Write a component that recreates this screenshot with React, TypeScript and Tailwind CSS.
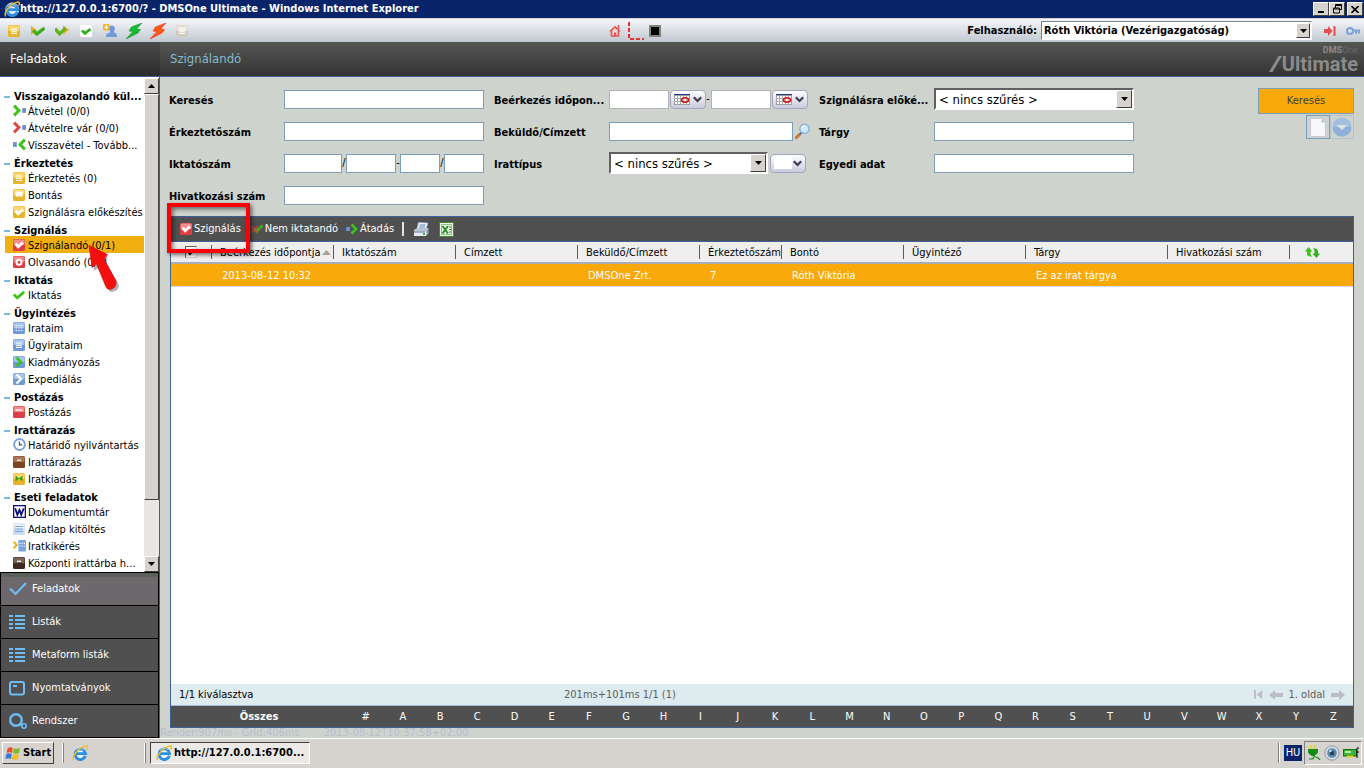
import type { ReactNode, SVGProps } from "react";
import { clsx } from "clsx";

type IconProps = SVGProps<SVGSVGElement>;

const Svg = ({ size = 12, children, ...props }: IconProps & { size?: number }) => (
  <svg width={size} height={size} viewBox="0 0 12 12" fill="none" aria-hidden="true" className="shrink-0" {...props}>
    {children}
  </svg>
);

// icons
const tones = {
  yellow: ["#f9d873", "#e9b32c"],
  red: ["#f28b8b", "#dc4046"],
  blue: ["#a9c4ec", "#6f99d8"],
  brown: ["#a87858", "#7c4424"],
  dark: ["#7c6458", "#3e2a22"],
  light: ["#e9f0fb", "#cddcf3"],
  stone: ["#ece7dc", "#d2ccc0"],
};

const Tile = ({ tone, size, children }: { tone: keyof typeof tones; size?: number; children?: ReactNode }) => (
  <Svg size={size}>
    <rect width="12" height="12" rx="1.5" fill={tones[tone][1]} />
    <rect x="0.5" y="0.5" width="11" height="5.5" rx="1" fill={tones[tone][0]} />
    {children}
  </Svg>
);

const whiteCheck = <path d="M2.5 4.8 5.2 7.8 9.8 3.5" stroke="#fff" strokeWidth="2.9" />;
const whiteLines = <path d="M3 4h6M3 6.2h6M3 8.4h6" stroke="#fff" strokeWidth="1.1" />;

const Check = ({ color = "#2fae1c", size }: { color?: string; size?: number }) => (
  <Svg size={size}>
    <path d="M0.8 5.4 4.2 8.8 11.2 2.8" stroke={color} strokeWidth="2.8" />
  </Svg>
);

const Chevrons = ({ color, flip }: { color: string; flip?: boolean }) => (
  <Svg size={13} transform={flip ? "scale(-1 1)" : undefined}>
    <path d="M1 1.5 5.4 6 1 10.5" stroke={color} strokeWidth="2.8" />
    <rect x="8.5" y="3.8" width="3.5" height="4.4" fill="#6d8fd0" />
  </Svg>
);

const IeIcon = ({ size = 16 }: { size?: number }) => (
  <svg width={size} height={size} viewBox="0 0 16 16" fill="none" aria-hidden="true" className="shrink-0">
    <circle cx="8.2" cy="8.6" r="7" fill="#f4faff" opacity="0.9" />
    <path d="M13.4 10.8A5.3 5.3 0 1 1 13.6 8.6H4.5" stroke="#2d8fe0" strokeWidth="2.9" />
    <path d="M4.3 5.2A5.3 5.3 0 0 1 12 5" stroke="#66bdf5" strokeWidth="1.2" />
    <path d="M1.8 15.2C-.6 12.6 4 6.2 8.6 3.2 12 1 15.4.2 15.4 2.2c0 .8-.4 1.7-.8 2.4" stroke="#f1b92c" strokeWidth="1.5" />
  </svg>
);

const Bolt = ({ fill, stroke }: { fill: string; stroke: string }) => (
  <svg width="16" height="16" viewBox="0 0 16 16" aria-hidden="true">
    <path d="M16 0 5.5 4 3 8l4 .5L0 16l12-6 2.5-3.5L10.5 6z" fill={fill} stroke={stroke} strokeWidth="0.5" />
  </svg>
);

const PersonIcon = () => (
  <svg width="14" height="14" viewBox="0 0 14 14" aria-hidden="true">
    <path d="M5.5 5a3.2 3.2 0 1 1 5.5 2v1.5c2 .4 3 1.5 3 4.5H3c0-3 1.5-4 4-4.5V7z" fill="#6f99d8" />
    <rect width="6.5" height="6.5" rx="1" fill="#eab830" />
    <path d="M3.3 1.5v3.6M1.5 3.3h3.6" stroke="#fff" strokeWidth="1.3" />
  </svg>
);

const ListIcon = () => (
  <svg width="16" height="16" viewBox="0 0 16 16" aria-hidden="true" stroke="#6fbdf5" strokeWidth="2">
    <path d="M0 2h4M6 2h10M0 6h4M6 6h10M0 10h4M6 10h10M0 14h4M6 14h10" />
  </svg>
);

const Down = () => (
  <svg width="7" height="4" viewBox="0 0 7 4" aria-hidden="true">
    <path d="M0 0h7L3.5 4z" fill="#000" />
  </svg>
);

const bevel = "border border-t-white border-l-white border-r-[#404040] border-b-[#404040] bg-[#d6d3ce]";

type Item = { label: string; icon: ReactNode; active?: boolean };

const groups: { title: string; items: Item[] }[] = [
  {
    title: "Visszaigazolandó kül...",
    items: [
      { label: "Átvétel (0/0)", icon: <Chevrons color="#3cc41c" /> },
      { label: "Átvételre vár (0/0)", icon: <Chevrons color="#dc4848" /> },
      { label: "Visszavétel - Tovább...", icon: <Chevrons color="#3cc41c" flip /> },
    ],
  },
  {
    title: "Érkeztetés",
    items: [
      { label: "Érkeztetés (0)", icon: <Tile tone="yellow">{whiteLines}</Tile> },
      { label: "Bontás", icon: <Tile tone="yellow"><rect x="2.5" y="2.5" width="7" height="5" fill="#fff" /></Tile> },
      { label: "Szignálásra előkészítés", icon: <Tile tone="yellow">{whiteCheck}</Tile> },
    ],
  },
  {
    title: "Szignálás",
    items: [
      { label: "Szignálandó (0/1)", icon: <Tile tone="red">{whiteCheck}</Tile>, active: true },
      {
        label: "Olvasandó (0/0)",
        icon: <Tile tone="red"><circle cx="6" cy="6.3" r="2.5" stroke="#fff" strokeWidth="2" fill="#dc4046" /></Tile>,
      },
    ],
  },
  { title: "Iktatás", items: [{ label: "Iktatás", icon: <Check color="#3cc41c" /> }] },
  {
    title: "Ügyintézés",
    items: [
      {
        label: "Irataim",
        icon: <Tile tone="blue"><path d="M2.5 3.5h7M2.5 6h7M2.5 8.5h7" stroke="#fff" strokeDasharray="1.5 1.2" strokeWidth="1.2" /></Tile>,
      },
      { label: "Ügyirataim", icon: <Tile tone="blue">{whiteLines}</Tile> },
      { label: "Kiadmányozás", icon: <Tile tone="blue"><path d="M3.5 1.5 8 6l-4.5 4.5" stroke="#3cc41c" strokeWidth="2.6" /></Tile> },
      { label: "Expediálás", icon: <Tile tone="blue"><path d="M3.5 1.5 8 6l-4.5 4.5" stroke="#fff" strokeWidth="2.4" /></Tile> },
    ],
  },
  { title: "Postázás", items: [{ label: "Postázás", icon: <Tile tone="red"><path d="M2.5 4h7" stroke="#fff" strokeWidth="1.3" /></Tile> }] },
  {
    title: "Irattárazás",
    items: [
      {
        label: "Határidő nyilvántartás",
        icon: (
          <Svg size={13}>
            <circle cx="6" cy="6" r="5" fill="#fff" stroke="#7da2dc" strokeWidth="1.8" />
            <path d="M6 3.2V6.4H8.5" stroke="#35507c" strokeWidth="1.2" />
          </Svg>
        ),
      },
      { label: "Irattárazás", icon: <Tile tone="brown"><path d="M4 4.2h4" stroke="#fff" strokeWidth="1.2" /></Tile> },
      {
        label: "Iratkiadás",
        icon: <Tile tone="yellow"><path d="M2.5 2.5 6 5.5 2.5 8.5zM9.5 2.5 6 5.5l3.5 3z" fill="#2f9e1c" /></Tile>,
      },
    ],
  },
  {
    title: "Eseti feladatok",
    items: [
      {
        label: "Dokumentumtár",
        icon: (
          <Svg size={13}>
            <rect x="0.6" y="0.6" width="10.8" height="10.8" fill="#fff" stroke="#10107c" strokeWidth="1.2" />
            <path d="M2 3 4 9 6 4.5 7.6 9 10 3" stroke="#10107c" strokeWidth="1.7" />
          </Svg>
        ),
      },
      { label: "Adatlap kitöltés", icon: <Tile tone="light"><path d="M2 3.5h8M2 6h8M2 8.5h8" stroke="#7da2dc" /></Tile> },
      {
        label: "Iratkikérés",
        icon: (
          <Svg size={13}>
            <path d="M.5 2.5 3.5 5.5.5 8.5" stroke="#eab020" strokeWidth="1.8" />
            <rect x="5" y="1" width="7" height="10.5" rx="1" fill="#7da2dc" />
            <path d="M6 4h5M6 6.5h5" stroke="#fff" strokeDasharray="1 1" />
          </Svg>
        ),
      },
      { label: "Központi irattárba h...", icon: <Tile tone="dark"><path d="M4 4.2h4" stroke="#fff" strokeWidth="1.2" /></Tile> },
    ],
  },
];

const sections: Item[] = [
  {
    label: "Feladatok",
    active: true,
    icon: (
      <svg width="18" height="16" viewBox="0 0 18 16" fill="none" aria-hidden="true">
        <path d="M1 7.5 6.5 13 17 2" stroke="#6fbdf5" strokeWidth="2.2" />
      </svg>
    ),
  },
  { label: "Listák", icon: <ListIcon /> },
  { label: "Metaform listák", icon: <ListIcon /> },
  {
    label: "Nyomtatványok",
    icon: (
      <svg width="16" height="16" viewBox="0 0 16 16" fill="none" aria-hidden="true" stroke="#6fbdf5" strokeWidth="2">
        <rect x="1" y="2" width="14" height="12.5" rx="2" />
        <path d="M4 6h4" />
      </svg>
    ),
  },
  {
    label: "Rendszer",
    icon: (
      <svg width="18" height="16" viewBox="0 0 18 16" fill="none" aria-hidden="true" stroke="#6fbdf5">
        <circle cx="7" cy="7" r="5.8" strokeWidth="2.4" />
        <circle cx="15" cy="13" r="2.2" strokeWidth="1.6" />
        <path d="M11 12h2" strokeWidth="2" />
      </svg>
    ),
  },
];

const TitleBar = () => (
  <header className="flex h-[18px] shrink-0 items-center bg-[#0a246a] pl-1 text-white">
    <IeIcon />
    <h1 className="flex-1 truncate font-bold">http://127.0.0.1:6700/? - DMSOne Ultimate - Windows Internet Explorer</h1>
    <div className="flex pr-px">
      <button aria-label="Minimize" className={clsx(bevel, "flex h-3.5 w-4 items-end justify-center pb-0.5")}>
        <span className="h-0.5 w-1.5 bg-black" />
      </button>
      <button aria-label="Restore" className={clsx(bevel, "flex h-3.5 w-4 items-center justify-center")}>
        <svg width="9" height="10" viewBox="0 0 9 10" fill="none" stroke="#000" aria-hidden="true">
          <path d="M2.5 4V.5h6v5H7M2.5 1.5h6M.5 4h6v5h-6zM.5 5h6" />
        </svg>
      </button>
      <button aria-label="Close" className={clsx(bevel, "ml-0.5 flex h-3.5 w-4 items-center justify-center")}>
        <svg width="8" height="7" viewBox="0 0 8 7" stroke="#000" strokeWidth="1.6" aria-hidden="true">
          <path d="M.5 0l7 7M7.5 0l-7 7" />
        </svg>
      </button>
    </div>
  </header>
);

const tools = [
  { name: "Lista", icon: <Tile tone="yellow">{whiteLines}</Tile> },
  { name: "Elfogad", icon: <Svg size={14}><path d="M0 1.5 5 5.5 0 9.5z" fill="#eab020" /><path d="M2 5.5l3 3.2 6.5-5.2" stroke="#3cae1c" strokeWidth="2.8" /></Svg> },
  { name: "Továbbít", icon: <Svg size={14}><path d="M7 1 12 5 7 9z" fill="#eab020" /><path d="M0 4l4 4.5L9 3.5" stroke="#5cb41c" strokeWidth="2.8" /></Svg> },
  { name: "Kész", icon: <Svg><rect width="12" height="12" rx="1" fill="#fff" /><path d="M2 5.5 5 8.3 10.5 4" stroke="#2fae1c" strokeWidth="2.8" /></Svg> },
  { name: "Új személy", icon: <PersonIcon /> },
  { name: "Csatlakozás", icon: <Bolt fill="#10c030" stroke="#0f7c20" /> },
  { name: "Bontás", icon: <Bolt fill="#ff5a10" stroke="#f01010" /> },
  { name: "Napló", icon: <Tile tone="stone">{whiteLines}</Tile> },
];

const TopToolbar = () => (
  <div className="flex h-6 shrink-0 items-center border-t border-[#d6d3ce] bg-linear-to-b from-[#f4f7fa] to-[#c2c8d0]">
    <div className="flex w-[608px] shrink items-center pl-0.5">
      {tools.map((tool) => (
        <button key={tool.name} aria-label={tool.name} className="flex w-6 justify-center">
          {tool.icon}
        </button>
      ))}
    </div>
    <div className="flex items-center">
      <button aria-label="Kezdőlap" className="p-px">
        <Svg>
          <path d="M1 6.5 6 1.8l5 4.7M2.5 6v5h7V6" stroke="#e05858" strokeWidth="1.7" fill="#fbd4d4" />
          <path d="M9.5 0v4" stroke="#e05858" strokeWidth="1.6" />
          <path d="M5 7.5h2.2v4H5z" fill="#e05858" />
        </Svg>
      </button>
      <svg width="17" height="18" viewBox="0 0 17 18" className="ml-1.5" fill="none" aria-hidden="true">
        <path d="M1 0v17h15" stroke="#f00000" strokeWidth="1.6" strokeDasharray="4 2" />
      </svg>
      <div className="ml-1 size-3 border-2 border-[#808080] bg-black" />
    </div>
    <div className="flex flex-1 items-center justify-end pr-1">
      <label htmlFor="user" className="pr-1 font-bold">Felhasználó:</label>
      <div className="relative">
        <select
          id="user"
          className="h-[19px] w-[271px] appearance-none border border-t-[#808080] border-l-[#808080] border-r-white border-b-white bg-white pl-0.5 font-bold"
        >
          <option>Róth Viktória (Vezérigazgatóság)</option>
        </select>
        <span className={clsx(bevel, "pointer-events-none absolute inset-y-0.5 right-0.5 flex w-3.5 items-center justify-center")}>
          <Down />
        </span>
      </div>
      <button aria-label="Kilépés" className="ml-3">
        <Svg><path d="M0 4h4V1l4.5 5L4 11V8H0zM9.5 1h2v10h-2z" fill="#e25050" /></Svg>
      </button>
      <button aria-label="Jelszó" className="ml-2.5">
        <svg width="14" height="12" viewBox="0 0 14 12" fill="none" stroke="#7da2dc" strokeWidth="2" aria-hidden="true">
          <circle cx="4" cy="6" r="3" />
          <path d="M7 5.5h7M10 6v3M13 6v2.5" />
        </svg>
      </button>
    </div>
  </div>
);

const PageHeader = () => (
  <div className="flex h-[35px] shrink-0 items-center border-b border-[#3f5f9a] bg-linear-to-b from-[#565755] to-[#333] text-[13px]">
    <h2 className="flex h-full w-40 shrink-0 items-center bg-linear-to-b from-[#4b4b4b] to-[#2b2b2b] pl-2.5 text-white">Feladatok</h2>
    <h2 className="flex-1 pl-2.5 text-[#85bccb]">Szignálandó</h2>
    <div className="flex flex-col items-end pr-1.5 font-[Roboto] font-bold text-[#8b8b8b]">
      <span className="text-[9px] leading-[9px]">
        DMS<span className="font-normal text-[#666]">One</span>
      </span>
      <div className="flex items-center">
        <svg width="13" height="16" viewBox="0 0 13 16" aria-hidden="true">
          <path d="M0 16 9.500 0H13L3.500 16z" fill="#8b8b8b" />
        </svg>
        <span className="text-xl leading-[18px]">Ultimate</span>
      </div>
    </div>
  </div>
);

const Arrow = () => (
  <svg width="36" height="50" viewBox="0 0 36 50" className="absolute left-[81px] top-2 z-10" aria-hidden="true">
    <path d="M6 4 22 13 20 18 33 41Q33 48 24 48L13 23 8 27z" fill="#000" opacity="0.3" />
    <path d="M3 1.5 21.5 10.5 18 15 30 37Q31 44 24 45.5 21 45.5 20 43L10.5 20 6 23.5z" fill="#f40f0f" stroke="#d00808" strokeWidth="0.6" />
  </svg>
);

const Scrollbar = () => (
  <div className="flex w-[15px] shrink-0 flex-col bg-[#e9e7e3]" aria-hidden="true">
    <div className={clsx(bevel, "flex h-4 items-center justify-center")}>
      <svg width="7" height="4" viewBox="0 0 7 4"><path d="M0 4h7L3.5 0z" /></svg>
    </div>
    <div className={clsx(bevel, "h-[406px]")} />
    <div className="flex-1" />
    <div className={clsx(bevel, "flex h-4 items-center justify-center")}>
      <Down />
    </div>
  </div>
);

const Sidebar = () => (
  <aside className="flex w-40 shrink-0 flex-col border-r border-[#3f5f9a] bg-white">
    <div className="flex min-h-0 flex-1 pt-px">
      <nav className="min-w-0 flex-1 overflow-hidden pt-2">
        {groups.map((group) => (
          <section key={group.title}>
            <h3 className="flex h-4 items-end whitespace-nowrap pl-1 font-bold leading-[10px]">
              <span className="mb-1 mr-1 h-0.5 w-1.5 shrink-0 bg-[#7ab8e0]" />
              {group.title}
            </h3>
            <ul>
              {group.items.map((item) => (
                <li key={item.label} className={clsx("relative ml-[5px] h-[17px]", item.active && "bg-[#f0ae10]")}>
                  <a href="#" className="flex h-full items-center whitespace-nowrap pl-2">
                    <span className="flex w-[15px] shrink-0">{item.icon}</span>
                    <span className="pt-0.5">{item.label}</span>
                  </a>
                  {item.active && <Arrow />}
                </li>
              ))}
            </ul>
          </section>
        ))}
      </nav>
      <Scrollbar />
    </div>
    <nav className="shrink-0 border-x border-t border-black text-white">
      {sections.map((item) => (
        <a
          key={item.label}
          href="#"
          className={clsx(
            "flex h-[33px] items-center border-b border-black pl-2",
            item.active ? "bg-[#6c686c] shadow-[inset_0_4px_#5c605a]" : "bg-[#505050]"
          )}
        >
          <span className="flex w-[23px]">{item.icon}</span>
          {item.label}
        </a>
      ))}
    </nav>
  </aside>
);

const Field = ({ id, label, children }: { id: string; label: string; children: ReactNode }) => (
  <div className="flex h-8 items-center">
    <label htmlFor={id} className="w-[115px] shrink-0 whitespace-nowrap pt-1 font-bold">{label}</label>
    <div className="flex w-[200px] items-center">{children}</div>
  </div>
);

const Input = ({ id, className, label }: { id: string; className?: string; label?: string }) => (
  <input id={id} aria-label={label} className={clsx("h-[19px] min-w-0 border border-[#7b9ebd] bg-white px-1 outline-none", className)} />
);

const Separator = ({ children }: { children: string }) => <span className="w-1 shrink-0 text-center">{children}</span>;

const FilterSelect = ({ id, className }: { id: string; className: string }) => (
  <div className={clsx("relative shrink-0", className)}>
    <select
      id={id}
      className="block h-[22px] w-full appearance-none border-2 border-t-[#606060] border-l-[#606060] border-r-white border-b-white bg-white pl-[3px] pt-px text-[13px] leading-4"
    >
      <option>&lt; nincs szűrés &gt;</option>
    </select>
    <span className={clsx(bevel, "pointer-events-none absolute inset-y-0.5 right-0.5 flex w-4 items-center justify-center")}>
      <Down />
    </span>
  </div>
);

const PickButton = ({ label, calendar }: { label: string; calendar?: boolean }) => (
  <button
    type="button"
    aria-label={label}
    className="flex h-[19px] w-9 shrink-0 items-center justify-between rounded-sm border border-[#a5a5bd] bg-linear-to-b from-white to-[#c9cbdf] px-[3px]"
  >
    {calendar ? (
      <svg width="16" height="11" viewBox="0 0 16 11" fill="none" aria-hidden="true">
        <rect x="0.5" y="1.5" width="15" height="9" fill="#fff" stroke="#9c9c9c" />
        <path d="M0 4.5h16M0 7.5h16M3.5 2v9M6.5 2v9M9.5 2v9M12.5 2v9" stroke="#aaa" />
        <path d="M0 .5h16" stroke="#1c3c94" />
        <ellipse cx="11" cy="6" rx="3.5" ry="2.2" stroke="#d41414" strokeWidth="1.6" />
      </svg>
    ) : (
      <span className="h-3 w-[18px] bg-white" />
    )}
    <svg width="9" height="7" viewBox="0 0 9 7" fill="none" stroke="#3c3c4c" strokeWidth="2.2" aria-hidden="true">
      <path d="M.8 1.2 4.5 5 8.2 1.2" />
    </svg>
  </button>
);

const FilterForm = () => (
  <form className="flex items-start pb-[5px] pl-[9px] pr-2.5 pt-1.5">
    <div className="flex flex-1 gap-2.5">
      <div>
        <Field id="kereses" label="Keresés"><Input id="kereses" className="w-full" /></Field>
        <Field id="erkezteto" label="Érkeztetőszám"><Input id="erkezteto" className="w-full" /></Field>
        <Field id="iktato" label="Iktatószám">
          <Input id="iktato" className="w-[58px]" />
          <Separator>/</Separator>
          <Input id="iktato2" label="Iktatószám 2" className="w-[50px]" />
          <Separator>-</Separator>
          <Input id="iktato3" label="Iktatószám 3" className="w-10" />
          <Separator>/</Separator>
          <Input id="iktato4" label="Iktatószám 4" className="w-10" />
        </Field>
        <Field id="hivatkozas" label="Hivatkozási szám"><Input id="hivatkozas" className="w-full" /></Field>
      </div>
      <div>
        <Field id="beerkezes" label="Beérkezés időpon...">
          <Input id="beerkezes" className="mr-px w-[60px] shrink-0 border-[#b4b4b4]" />
          <PickButton label="Kezdő dátum" calendar />
          <Separator>-</Separator>
          <Input id="beerkezes2" label="Beérkezés vége" className="ml-px mr-px w-[60px] shrink-0 border-[#b4b4b4]" />
          <PickButton label="Záró dátum" calendar />
        </Field>
        <Field id="bekuldo" label="Beküldő/Címzett">
          <Input id="bekuldo" className="w-[184px] shrink-0" />
          <button type="button" aria-label="Beküldő keresése" className="ml-px shrink-0">
            <svg width="16" height="17" viewBox="0 0 16 17" fill="none" aria-hidden="true">
              <path d="M1.5 15.5 6 11" stroke="#c47830" strokeWidth="3" />
              <path d="M5.5 11.5 7.5 9.5" stroke="#5c6c8c" strokeWidth="2" />
              <circle cx="10.5" cy="5.8" r="4.6" fill="#c8eafc" stroke="#8fb0dc" strokeWidth="1.5" />
              <path d="M8 5a3 3 0 0 1 3-2" stroke="#fff" strokeWidth="1.5" />
            </svg>
          </button>
        </Field>
        <Field id="irattipus" label="Irattípus">
          <FilterSelect id="irattipus" className="mr-0.5 w-[159px]" />
          <PickButton label="Irattípus választó" />
        </Field>
      </div>
      <div>
        <Field id="eloke" label="Szignálásra előké..."><FilterSelect id="eloke" className="w-full" /></Field>
        <Field id="targy" label="Tárgy"><Input id="targy" className="w-full" /></Field>
        <Field id="egyedi" label="Egyedi adat"><Input id="egyedi" className="w-full" /></Field>
      </div>
    </div>
    <div className="flex flex-col items-end gap-px pt-[5px]">
      <button type="button" className="h-[26px] w-24 border border-[#7b9ebd] bg-[#f9a90a] text-[#404040]">Keresés</button>
      <div className="flex">
        <button type="button" aria-label="Új lap" className="flex size-6 items-center justify-center border border-[#7b9ebd]">
          <svg width="16" height="19" viewBox="0 0 16 19" aria-hidden="true">
            <path d="M.5.5h11l4 4v14H.5z" fill="#f8f8fc" stroke="#c8c8d4" />
            <path d="M11.5.5v4h4" fill="#b4c8e4" />
          </svg>
        </button>
        <button type="button" aria-label="Lenyitás" className="flex size-6 items-center justify-center border border-[#b0c3d4]">
          <svg width="20" height="20" viewBox="0 0 20 20" aria-hidden="true">
            <circle cx="10" cy="10" r="9.5" fill="#a3bfe0" />
            <path d="M.5 10a9.5 9.5 0 0 0 19 0z" fill="#8fb0d8" />
            <path d="M4.5 8h11L10 13z" fill="#dde4e4" />
          </svg>
        </button>
      </div>
    </div>
  </form>
);

const GridToolbar = () => (
  <div className="relative flex h-[25px] items-center border-b border-[#3f5f9a] bg-[#505050] pl-[9px] text-white">
    <button className="flex items-center gap-0.5"><Tile tone="red">{whiteCheck}</Tile>Szignálás</button>
    <button className="ml-2.5 flex items-center gap-0.5">
      <Svg>
        <path d="M3 5.5 5.5 8.5 11.5 2.5" stroke="#3cae1c" strokeWidth="2.8" />
        <path d="M0.5 3.5l6 6M6.5 3.5l-6 6" stroke="#e04030" strokeWidth="1.5" />
      </Svg>
      Nem iktatandó
    </button>
    <button className="ml-2 flex items-center gap-0.5">
      <Svg>
        <rect y="4" width="4" height="4" fill="#6d8fd0" />
        <path d="M5.5 1.5 10 6l-4.5 4.5" stroke="#3cc41c" strokeWidth="2.6" />
      </Svg>
      Átadás
    </button>
    <span className="ml-2 h-3.5 w-0.5 bg-[#e4e4e4]" />
    <button aria-label="Nyomtatás" className="ml-2.5">
      <svg width="15" height="15" viewBox="0 0 15 15" aria-hidden="true">
        <path d="M4.5.5 14 1l-2 6H3z" fill="#f8fcff" stroke="#8fb0dc" strokeWidth="0.8" />
        <path d="M5.5 3h6M5 5h6" stroke="#5c7cb4" />
        <path d="M0 8 3 6h11.5v5L12 14H0z" fill="#b8c4d4" />
        <path d="M0 9.5h12V14H0z" fill="#e8eef4" />
        <path d="M0 10h11M14 7v4" stroke="#5c7498" />
        <rect x="9" y="11" width="2" height="2" fill="#20c420" />
      </svg>
    </button>
    <button aria-label="Excel" className="ml-2.5">
      <svg width="15" height="15" viewBox="0 0 15 15" fill="none" aria-hidden="true">
        <rect x="0.5" y="0.5" width="14" height="14" fill="#eaf5e4" stroke="#3c8c2c" />
        <rect x="2.5" y="2.5" width="10" height="10" stroke="#8cc47c" />
        <path d="M3.5 4 9 11.5M9 4l-5.5 7.5" stroke="#2c8c2c" strokeWidth="2" />
        <path d="M10 5h2.5M10 7.5h2.5M10 10h2.5" stroke="#3c8c2c" />
      </svg>
    </button>
    {/* callout round the first command */}
    <div className="pointer-events-none absolute -left-1 -top-3.5 z-10 h-[50px] w-[83px] border-4 border-[#fb0007] shadow-[2px_2px_4px_#0008,inset_2px_2px_4px_#0008]" />
  </div>
);

const columns = [
  { title: "Beérkezés időpontja", width: "w-[122px]", value: "2013-08-12 10:32", sorted: true },
  { title: "Iktatószám", width: "w-[122px]", value: "" },
  { title: "Címzett", width: "w-[122px]", value: "" },
  { title: "Beküldő/Címzett", width: "w-[122px]", value: "DMSOne Zrt." },
  { title: "Érkeztetőszám", width: "w-[82px]", value: "7" },
  { title: "Bontó", width: "w-[122px]", value: "Róth Viktória" },
  { title: "Ügyintéző", width: "w-[122px]", value: "" },
  { title: "Tárgy", width: "w-[142px]", value: "Ez az irat tárgya" },
  { title: "Hivatkozási szám", width: "w-[122px]", value: "" },
];

const DataTable = () => (
  <table className="w-full table-fixed border-collapse">
    <thead>
      <tr className="h-[21px] border-b-2 border-[#a9adb6] bg-[#efefef] text-left">
        <th className="w-10 p-0 pl-3.5">
          <span className="relative block size-3">
            <input
              type="checkbox"
              defaultChecked
              aria-label="Összes kijelölése"
              className="block size-3 appearance-none border border-t-[#606060] border-l-[#606060] border-r-[#d6d3ce] border-b-[#d6d3ce] bg-white"
            />
            <Svg size={8} className="pointer-events-none absolute left-0.5 top-0.5">
              <path d="M1 5l3.5 4L11 2" stroke="#000" strokeWidth="3" />
            </Svg>
          </span>
        </th>
        {columns.map((col) => (
          <th key={col.title} className={clsx("p-0 font-normal", col.width)}>
            <div className="flex h-3.5 items-center justify-between overflow-hidden whitespace-nowrap border-l border-[#3f5f9a] pl-2 pr-0.5">
              <span className="pt-px">{col.title}</span>
              {col.sorted && (
                <svg width="9" height="5" viewBox="0 0 9 5" className="shrink-0" aria-hidden="true"><path d="M0 5h9L4.5 0z" fill="#a8a494" /></svg>
              )}
            </div>
          </th>
        ))}
        <th className="p-0">
          <div className="flex h-3.5 items-center border-l border-[#3f5f9a] pl-[15px]">
            <button aria-label="Frissítés">
              <svg width="15" height="11" viewBox="0 0 15 11" aria-hidden="true">
                <path d="M3.5 0 7.500 4.500H5.500V7q.2 1.500 1.500 2.500H4.500Q2 9 2 6.500v-2H0z" fill="#3cc41c" />
                <path d="M11.500 11 7.500 6.500H9.500V4Q9.300 2.500 8 1.500h2.500Q13 2 13 4.500v2h2z" fill="#34ae1c" />
              </svg>
            </button>
          </div>
        </th>
      </tr>
    </thead>
    <tbody>
      <tr className="h-[23px] border-b border-[#d4dcec] bg-[#f9a90a] text-white">
        <td className="p-0" />
        {columns.map((col) => (
          <td key={col.title} className="whitespace-nowrap p-0 pl-[11px] pt-0.5">{col.value}</td>
        ))}
        <td className="p-0" />
      </tr>
    </tbody>
  </table>
);

const Pager = () => (
  <div className="flex h-[22px] shrink-0 items-center border-b border-[#a3b8dc] bg-[#deebef] px-2">
    <span className="w-[385px]">1/1 kiválasztva</span>
    <span className="text-[#606060]">201ms+101ms 1/1 (1)</span>
    <div className="ml-auto flex items-center gap-1.5 text-[#606060]">
      <button aria-label="Első oldal"><Svg size={9}><path d="M0 0h2.5v12H0zM11 0v12L3.5 6z" fill="#bcbcc8" /></Svg></button>
      <button aria-label="Előző oldal">
        <svg width="14" height="10" viewBox="0 0 14 10" aria-hidden="true"><path d="M6 0v3h8v4H6v3L0 5z" fill="#bcbcc8" /></svg>
      </button>
      <span>1. oldal</span>
      <button aria-label="Következő oldal">
        <svg width="14" height="10" viewBox="0 0 14 10" aria-hidden="true"><path d="M8 0v3H0v4h8v3l6-5z" fill="#bcbcc8" /></svg>
      </button>
    </div>
  </div>
);

const Letters = () => (
  <div className="flex h-[21px] shrink-0 items-center bg-[#505050] pr-px text-white">
    <button className="w-44 font-bold">Összes</button>
    {"#ABCDEFGHIJKLMNOPQRSTUVWXYZ".split("").map((letter) => (
      <button key={letter} className="flex-1">{letter}</button>
    ))}
  </div>
);

const Taskbar = () => (
  <footer className="flex h-[30px] shrink-0 items-center border-t border-white bg-[#d6d3ce] px-0.5 pb-px font-bold">
    <button className={clsx(bevel, "flex h-[22px] w-[52px] items-center gap-0.5 pl-0.5")}>
      <svg width="16" height="15" viewBox="0 0 16 15" aria-hidden="true">
        <path d="M2.5 2.5Q5 .5 7.8 2L7 7Q4.5 5.5 1.5 7z" fill="#e8502c" />
        <path d="M8.8 2.3Q12 3.5 15 2L14 7Q11 8.5 8 7z" fill="#7cbc2c" />
        <path d="M1.3 8Q4 6.5 6.8 8L6 13Q3.5 11.5.3 13z" fill="#3c78dc" />
        <path d="M7.8 8.3Q11 9.5 13.8 8L13 13Q10 14.5 7 13z" fill="#f4bc1c" />
      </svg>
      Start
    </button>
    <span className="ml-2 h-5 w-0.5 border-l border-white bg-[#808080]" />
    <a href="#" aria-label="Internet Explorer" className="ml-2"><IeIcon /></a>
    <span className="ml-14 h-5 w-0.5 border-l border-white bg-[#808080]" />
    <button className="ml-1 flex h-[22px] w-40 items-center border border-t-[#404040] border-l-[#404040] border-r-white border-b-white bg-[#ebe9e6] pl-[5px]">
      <IeIcon />
      <span className="pl-0.5">http://127.0.0.1:6700...</span>
    </button>
    <div className="ml-auto flex items-center">
      <span className="h-5 w-0.5 border-l border-[#808080] bg-white" />
      <span className="ml-1 flex h-4 w-[18px] items-center justify-center bg-[#0a246a] font-normal text-white">HU</span>
      <div className="ml-0.5 flex h-6 w-[58px] items-center justify-around border border-t-[#808080] border-l-[#808080] border-r-white border-b-white">
        <svg width="14" height="16" viewBox="0 0 14 16" fill="none" aria-hidden="true">
          <path d="M4 0v4M8 0v4" stroke="#e8d800" strokeWidth="1.5" />
          <path d="M1 4h10v2q0 3-3 4v1H4v-1Q1 9 1 6z" fill="#108c10" />
          <path d="M2 14h4q0-3 3-2t4 3" stroke="#108c10" strokeWidth="1.2" />
        </svg>
        <svg width="16" height="16" viewBox="0 0 16 16" aria-hidden="true">
          <circle cx="8" cy="8" r="7.2" fill="#d4dce4" stroke="#8c98a4" />
          <circle cx="8" cy="8" r="4.8" fill="#5c88ac" />
          <circle cx="8" cy="8" r="2.2" fill="#20405c" />
          <circle cx="6.5" cy="6" r="1.2" fill="#cce4f4" />
        </svg>
        <svg width="16" height="12" viewBox="0 0 16 12" aria-hidden="true">
          <rect x="0.5" y="2.5" width="13" height="6.5" fill="#3cb43c" stroke="#147414" />
          <rect x="2" y="4" width="6" height="2" fill="#b4f4a0" />
          <path d="M4 9.5h6" stroke="#e8d800" strokeWidth="2" />
          <path d="M14 11V1h2M14 5h2" stroke="#000" fill="none" />
        </svg>
      </div>
    </div>
  </footer>
);

export default function App() {
  return (
    <div className="flex h-screen flex-col overflow-hidden bg-[#ced3cd] font-['DejaVu_Sans_Condensed','DejaVu_Sans',sans-serif] text-[11px] leading-4 text-black">
      <TitleBar />
      <TopToolbar />
      <PageHeader />
      <div className="flex min-h-0 flex-1">
        <Sidebar />
        <main className="flex min-w-0 flex-1 flex-col">
          <FilterForm />
          <section className="mx-2.5 flex min-h-0 flex-1 flex-col border border-[#3f5f9a] bg-white">
            <GridToolbar />
            <div className="min-h-0 flex-1">
              <DataTable />
            </div>
            <Pager />
            <Letters />
          </section>
          <div className="flex h-2.5 shrink-0 items-center gap-6 whitespace-nowrap text-[#b5c0cf]">
            <span>Render:907ms - Grid:406ms</span>
            <span>2013-08-12T10:37:58+02:00</span>
          </div>
        </main>
      </div>
      <Taskbar />
    </div>
  );
}
